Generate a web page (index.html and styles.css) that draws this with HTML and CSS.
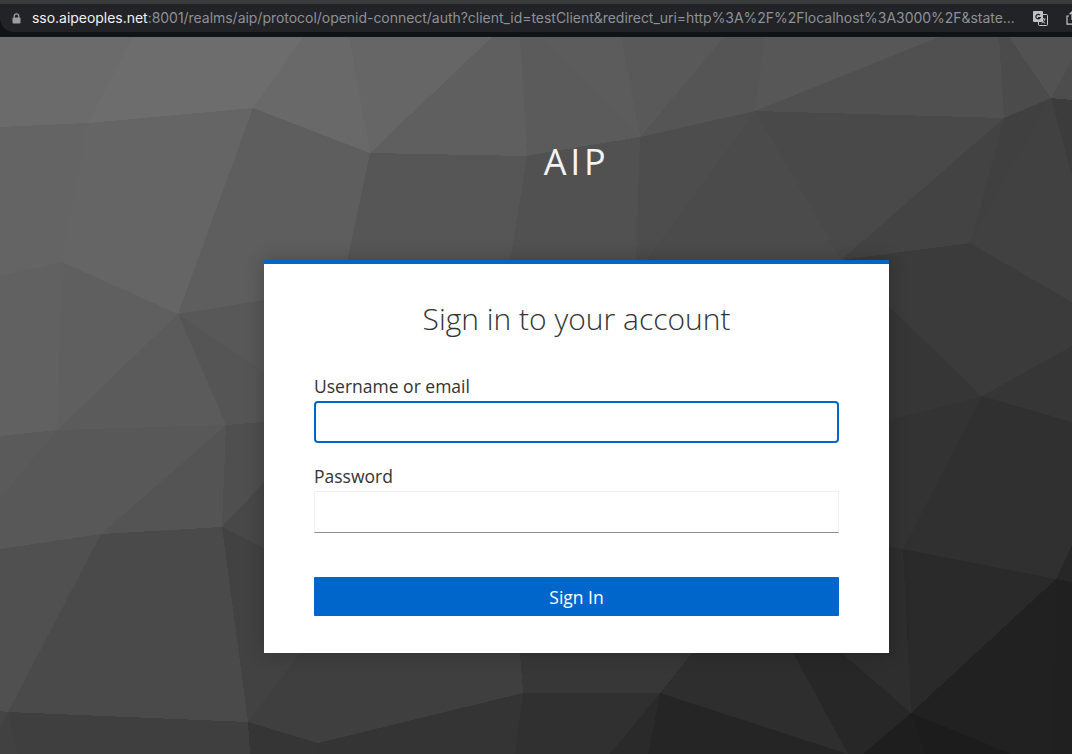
FILE: index.html
```html
<!DOCTYPE html>
<html lang="en">
<head>
<meta charset="utf-8">
<title>Sign in to AIP</title>
<link rel="stylesheet" href="styles.css">
</head>
<body>
<div class="browser-bar">
  <div class="address">
    <svg class="lock" viewBox="0 0 9 11" aria-hidden="true"><path class="lock-shackle" d="M2.2 5V3.2a2.3 2.3 0 0 1 4.6 0V5"/><rect class="lock-body" x="0.5" y="4.6" width="8" height="6" rx="1"/></svg>
    <div class="url"><span class="url-host">sso.aipeoples.net</span>:8001/realms/aip/protocol/openid-connect/auth?client_id=testClient&amp;redirect_uri=http%3A%2F%2Flocalhost%3A3000%2F&amp;state...</div>
    <svg class="translate" viewBox="0 0 15 15" aria-hidden="true">
      <rect class="tr-back" x="5.5" y="3.5" width="9" height="11" rx="1"/>
      <path class="tr-glyph-light" d="M8 8h4.5M10.2 7v1M11.8 8c-.5 2-1.6 3.4-3.2 4.2M9 9.6c.7 1.2 1.7 2.1 3.2 2.7"/>
      <rect class="tr-front" x="0" y="0" width="10" height="11" rx="1"/>
      <path class="tr-glyph-dark" d="M7 4.2a2.3 2.3 0 1 0 .3 2.4H5"/>
    </svg>
    <svg class="share" viewBox="0 0 12 14" aria-hidden="true"><path class="share-line" d="M3 5H1v8.2h10V5H9M6 9V1M3.6 3.2 6 .9l2.4 2.3"/></svg>
  </div>
</div>
<main class="page">
  <svg class="backdrop" viewBox="0 37 1072 717" aria-hidden="true">
    <rect x="0" y="37" width="1072" height="717" fill="#444"/>
    <polygon fill="#6b6b6b" points="0,37 133,37 88,123 0,127"/>
    <polygon fill="#6d6d6d" points="133,37 303,37 253,108 88,123"/>
    <polygon fill="#696969" points="303,37 349,37 370,153 253,108"/>
    <polygon fill="#666666" points="349,37 492,37 370,153"/>
    <polygon fill="#5f5f5f" points="492,37 520,37 527,156 370,153"/>
    <polygon fill="#5b5b5b" points="520,37 543,37 640,137 536,154 527,156"/>
    <polygon fill="#5c5c5c" points="543,37 621,37 640,137"/>
    <polygon fill="#595959" points="621,37 724,37 640,137"/>
    <polygon fill="#555555" points="724,37 765,37 755,111 640,137"/>
    <polygon fill="#575757" points="765,37 939,37 755,111"/>
    <polygon fill="#505050" points="939,37 999,37 1004,118 755,111"/>
    <polygon fill="#4b4b4b" points="999,37 1009,37 1051,98 1004,118"/>
    <polygon fill="#525252" points="1009,37 1072,37 1072,60 1051,98"/>
    <polygon fill="#4d4d4d" points="1072,60 1072,100 1051,98"/>
    <polygon fill="#646464" points="0,127 88,123 62,262 0,276"/>
    <polygon fill="#656565" points="88,123 253,108 178,314 62,262"/>
    <polygon fill="#5e5e5e" points="253,108 370,153 347,262 264,300 178,314"/>
    <polygon fill="#565656" points="370,153 527,156 510,262 347,262"/>
    <polygon fill="#515151" points="527,156 536,154 640,137 636,262 510,262"/>
    <polygon fill="#4d4d4d" points="640,137 755,111 645,262 636,262"/>
    <polygon fill="#4b4b4b" points="755,111 841,260 645,262"/>
    <polygon fill="#494949" points="755,111 1004,118 841,260"/>
    <polygon fill="#434343" points="1004,118 970,243 841,260"/>
    <polygon fill="#404040" points="1004,118 1051,98 970,243"/>
    <polygon fill="#3c3c3c" points="1051,98 1072,100 1072,176"/>
    <polygon fill="#414141" points="1051,98 1072,176 1072,302 970,243"/>
    <polygon fill="#3b3b3b" points="841,260 970,243 982,396"/>
    <polygon fill="#3b3b3b" points="970,243 1072,302 1072,346 982,396"/>
    <polygon fill="#363636" points="841,260 982,396 889,420 841,420"/>
    <polygon fill="#363636" points="982,396 1072,346 1072,422"/>
    <polygon fill="#303030" points="982,396 1072,422 1072,545 1056,579 903,549"/>
    <polygon fill="#333333" points="841,420 889,420 982,396 903,549 841,540"/>
    <polygon fill="#2e2e2e" points="841,540 903,549 911,713 842,653"/>
    <polygon fill="#2a2a2a" points="903,549 1056,579 911,713"/>
    <polygon fill="#272727" points="1056,579 1072,545 1072,582"/>
    <polygon fill="#202020" points="1056,579 1072,582 1072,754 1053,754"/>
    <polygon fill="#212121" points="1056,579 1053,754 1012,754 911,713"/>
    <polygon fill="#1c1c1c" points="911,713 1012,754 925,754"/>
    <polygon fill="#1e1e1e" points="911,713 925,754 863,754"/>
    <polygon fill="#616161" points="0,276 62,262 57,430 0,436"/>
    <polygon fill="#5f5f5f" points="62,262 178,314 57,430"/>
    <polygon fill="#5b5b5b" points="178,314 226,425 57,430"/>
    <polygon fill="#5a5a5a" points="0,436 57,430 0,498"/>
    <polygon fill="#585858" points="0,498 57,430 101,534 0,549"/>
    <polygon fill="#585858" points="57,430 226,425 101,534"/>
    <polygon fill="#545454" points="226,425 222,527 101,534"/>
    <polygon fill="#505050" points="0,549 101,534 8,712 0,711"/>
    <polygon fill="#4a4a4a" points="101,534 222,527 248,722 8,712"/>
    <polygon fill="#555555" points="178,314 264,372 264,422 226,425"/>
    <polygon fill="#585858" points="178,314 264,300 264,372"/>
    <polygon fill="#4f4f4f" points="226,425 264,422 264,482 222,527"/>
    <polygon fill="#484848" points="222,527 264,482 264,548"/>
    <polygon fill="#424242" points="222,527 264,548 264,653 300,653 248,722"/>
    <polygon fill="#3f3f3f" points="300,653 335,653 318,743 248,722"/>
    <polygon fill="#3f3f3f" points="335,653 520,653 523,693 318,743"/>
    <polygon fill="#373737" points="520,653 692,653 660,693 523,693"/>
    <polygon fill="#343434" points="318,743 523,693 515,754 317,754"/>
    <polygon fill="#353535" points="248,722 318,743 317,754 250,754"/>
    <polygon fill="#303030" points="523,693 660,693 610,754 515,754"/>
    <polygon fill="#2a2a2a" points="660,693 648,754 610,754"/>
    <polygon fill="#252525" points="660,693 848,754 648,754"/>
    <polygon fill="#2e2e2e" points="692,653 793,653 848,754 660,693"/>
    <polygon fill="#272727" points="793,653 842,653 911,713 863,754 848,754"/>
    <polygon fill="#3f3f3f" points="8,712 248,722 250,754 17,754"/>
    <polygon fill="#454545" points="0,711 8,712 0,727"/>
    <polygon fill="#414141" points="0,727 8,712 17,754 0,754"/>
  </svg>
  <h1 class="realm">AIP</h1>
  <section class="card">
    <h2 class="card-title">Sign in to your account</h2>
    <form class="login-form">
      <div class="field">
        <label class="field-label" for="username">Username or email</label>
        <input class="text-input is-focused" id="username" type="text">
      </div>
      <div class="field">
        <label class="field-label" for="password">Password</label>
        <input class="text-input" id="password" type="password">
      </div>
      <button class="submit" type="button">Sign In</button>
    </form>
  </section>
</main>
</body>
</html>
```

FILE: styles.css
```css
* { box-sizing: border-box; }
html, body { margin: 0; height: 100%; }
body {
  width: 1072px;
  height: 754px;
  overflow: hidden;
  display: flex;
  flex-direction: column;
  background: #444;
  font-family: "Open Sans", "Liberation Sans", sans-serif;
}
.browser-bar {
  height: 37px;
  flex: none;
  background: linear-gradient(#3a3b3d 0 4px, #111213 4px);
}
.address {
  height: 28px;
  position: relative;
  top: 4px;
  display: flex;
  align-items: center;
  padding-left: 12px;
  background: #212327;
  border-radius: 0 0 0 14px;
  overflow: hidden;
}
.lock { width: 9px; height: 11px; flex: none; margin-right: 11px; }
.lock-body { fill: #9a9ca0; }
.lock-shackle { fill: none; stroke: #9a9ca0; stroke-width: 1.3; }
.url {
  width: 986px;
  flex: none;
  font: 14px/20px "Inter", "Liberation Sans", sans-serif;
  letter-spacing: -.03px;
  color: #8f9196;
  white-space: nowrap;
}
.url-host { color: #f1f1f2; }
.translate { width: 15px; height: 15px; flex: none; margin-left: 15px; }
.tr-back { fill: #212327; stroke: #c4c6c8; stroke-width: 1; }
.tr-front { fill: #bfc1c4; }
.tr-glyph-light { fill: none; stroke: #c4c6c8; stroke-width: .9; }
.tr-glyph-dark { fill: none; stroke: #212327; stroke-width: 1.2; }
.share { width: 12px; height: 14px; flex: none; margin-left: 18px; }
.share-line { fill: none; stroke: #c4c6c8; stroke-width: 1.2; }

.page {
  flex: 1;
  position: relative;
  padding: 94px 0 0 81px;
}
.backdrop {
  position: absolute;
  inset: 0;
  width: 100%;
  height: 100%;
  shape-rendering: crispEdges;
}
.realm {
  position: relative;
  margin: 0;
  height: 129px;
  font-size: 36px;
  line-height: 62px;
  font-weight: 400;
  letter-spacing: 3.75px;
  color: #f4f4f4;
  text-align: center;
  text-transform: uppercase;
}
.card {
  position: relative;
  width: 625px;
  margin: 0 auto;
  height: 393px;
  padding: 35px 50px 0;
  background: #fff;
  border-top: 4px solid #06c;
  box-shadow: 0 0 18px rgba(3, 3, 3, .24);
}
.card-title {
  margin: 0;
  font-size: 30px;
  line-height: 40px;
  font-weight: 300;
  color: #333;
  text-align: center;
}
.login-form {
  margin-top: 35px;
  display: flex;
  flex-direction: column;
}
.field { margin-bottom: 21px; }
.field-label {
  display: block;
  font-size: 17.5px;
  line-height: 24px;
  color: #333;
  margin-bottom: 3px;
}
.text-input {
  display: block;
  width: 100%;
  height: 42px;
  padding: 0 10px;
  background: #fff;
  border: 1px solid #f0f0f0;
  border-bottom: 1px solid #8a8d90;
  border-radius: 0;
  outline: none;
}
.is-focused {
  border: 2px solid #06c;
  border-radius: 4px;
}
.submit {
  height: 39px;
  margin-top: 23px;
  background: #06c;
  border: 0;
  border-radius: 1px;
  color: #fff;
  font-family: inherit;
  font-size: 17.5px;
}
```
